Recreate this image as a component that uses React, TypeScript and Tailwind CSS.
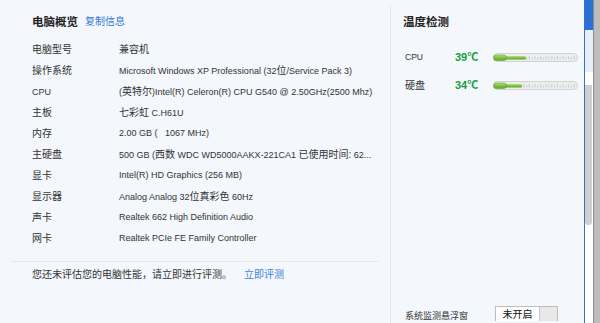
const font = {
  fontFamily: '"Liberation Sans", "Noto Sans CJK SC", sans-serif',
};

interface InfoRow {
  label: string;
  value: string;
}

const rows: InfoRow[] = [
  { label: "电脑型号", value: "兼容机" },
  { label: "操作系统", value: "Microsoft Windows XP Professional (32位/Service Pack 3)" },
  { label: "CPU", value: "(英特尔)Intel(R) Celeron(R) CPU G540 @ 2.50GHz(2500 Mhz)" },
  { label: "主板", value: "七彩虹 C.H61U" },
  { label: "内存", value: "2.00 GB (   1067 MHz)" },
  { label: "主硬盘", value: "500 GB (西数 WDC WD5000AAKX-221CA1 已使用时间: 62..." },
  { label: "显卡", value: "Intel(R) HD Graphics (256 MB)" },
  { label: "显示器", value: "Analog Analog 32位真彩色 60Hz" },
  { label: "声卡", value: "Realtek 662 High Definition Audio" },
  { label: "网卡", value: "Realtek PCIe FE Family Controller" },
];

// chinese runs get the slightly larger CJK size, latin stays small
function Mixed({ text }: { text: string }) {
  const parts = text.split(/([\u4e00-\u9fff:]+)/);
  return (
    <>
      {parts.map((p, i) =>
        /[\u4e00-\u9fff]/.test(p) ? (
          <span key={i} className="text-[10px]">
            {p}
          </span>
        ) : (
          <span key={i} className="whitespace-pre">
            {p}
          </span>
        )
      )}
    </>
  );
}

function TempBar({ fill }: { fill: number }) {
  const ticks = Array.from({ length: 25 }, (_, i) => i);
  return (
    <svg width="85" height="9" viewBox="0 0 85 9">
      <defs>
        <linearGradient id={`g${fill}`} x1="0" y1="0" x2="0" y2="1">
          <stop offset="0" stopColor="#b6e37a" />
          <stop offset="0.5" stopColor="#7cc443" />
          <stop offset="1" stopColor="#5aa52a" />
        </linearGradient>
      </defs>
      <rect x="0.5" y="0.5" width="84" height="8" rx="4" fill="#ededed" stroke="#d2d2d2" />
      {ticks.map((i) => (
        <line
          key={i}
          x1={14 + i * 2.8}
          x2={14 + i * 2.8}
          y1={i % 2 === 0 ? 3 : 4.5}
          y2={6.5}
          stroke="#c4c4c4"
          strokeWidth="0.8"
        />
      ))}
      <rect x="6" y="3" width={fill} height="3.5" rx="1.5" fill={`url(#g${fill})`} />
      <rect x="0.5" y="2" width="13" height="5.5" rx="2.75" fill={`url(#g${fill})`} stroke="#5aa52a" strokeWidth="0.6" />
    </svg>
  );
}

export default function App() {
  return (
    <div className="flex h-[323px] w-[600px] overflow-hidden bg-[#f4f7fc] text-[#333]" style={font}>
      {/* main panel */}
      <div className="flex w-[584px] shrink-0">
        {/* left: overview */}
        <div className="flex w-[390px] shrink-0 flex-col">
          <div className="flex items-center gap-[7px] pl-[32px] pt-[15px] leading-[14px]">
            <span className="text-[11.5px] font-bold text-[#222]">电脑概览</span>
            <span className="text-[10px] text-[#2f78d6]">复制信息</span>
          </div>
          <div className="mt-[10px] flex flex-col">
            {rows.map((r) => (
              <div key={r.label} className="flex h-[21px] items-center text-[9px]">
                <span className="w-[119px] shrink-0 pl-[32px] text-[10px]">
                  {r.label === "CPU" ? <span className="text-[9px]">CPU</span> : r.label}
                </span>
                <span className="whitespace-nowrap">
                  <Mixed text={r.value} />
                </span>
              </div>
            ))}
          </div>
          <div className="mx-[11px] mt-[12px] h-px w-[367px] bg-[#e3e6ea]" />
          <div className="flex h-[25px] items-center pl-[32px] text-[10px]">
            <span>您还未评估您的电脑性能，请立即进行评测。</span>
            <span className="ml-[12px] text-[#3b82e0]">立即评测</span>
          </div>
        </div>

        {/* right: temperature */}
        <div className="mt-[5px] flex flex-1 flex-col border-l border-[#e4e7ec] pl-[12px]">
          <div className="pt-[10px] text-[11.5px] font-bold leading-[14px] text-[#222]">温度检测</div>
          <div className="mt-[20px] flex flex-col gap-[12px]">
            <div className="flex h-[16px] items-center">
              <span className="w-[52px] pl-[2px] text-[8.5px]">CPU</span>
              <span className="w-[38px] text-[11px] font-bold text-[#14a03c]">39℃</span>
              <TempBar fill={27} />
            </div>
            <div className="flex h-[16px] items-center">
              <span className="w-[52px] pl-[2px] text-[10px]">硬盘</span>
              <span className="w-[38px] text-[11px] font-bold text-[#14a03c]">34℃</span>
              <TempBar fill={23} />
            </div>
          </div>
          <div className="mt-auto flex items-start">
            <span className="mt-[3px] w-[92px] pl-[2px] text-[9px] leading-[14px]">系统监测悬浮窗</span>
            <div className="flex h-[15px] border border-b-0 border-[#bcbcbc]">
              <span className="w-[43px] bg-white text-center text-[10px] leading-[15px] text-[#111]">未开启</span>
              <span className="w-[18px] border-l border-[#c8c8c8] bg-[#e8e8e8]" />
            </div>
          </div>
        </div>
      </div>

      {/* right edge: blue border + scrollbar */}
      <div className="w-px shrink-0 bg-[#3a6fc8]" />
      <div className="flex w-[8px] shrink-0 flex-col bg-white">
        <div className="h-[30px] bg-[#2a6fd6]" />
        <div className="h-[42px] bg-[#e6eefb]" />
        <div className="h-[13px] bg-white" />
        <div className="h-[140px] w-[7px] rounded-b-sm bg-[#cfcfcf]" />
      </div>
      <div className="w-[7px] shrink-0 border-l border-[#8d8d8d] bg-[#bdbdbd]" />
    </div>
  );
}
